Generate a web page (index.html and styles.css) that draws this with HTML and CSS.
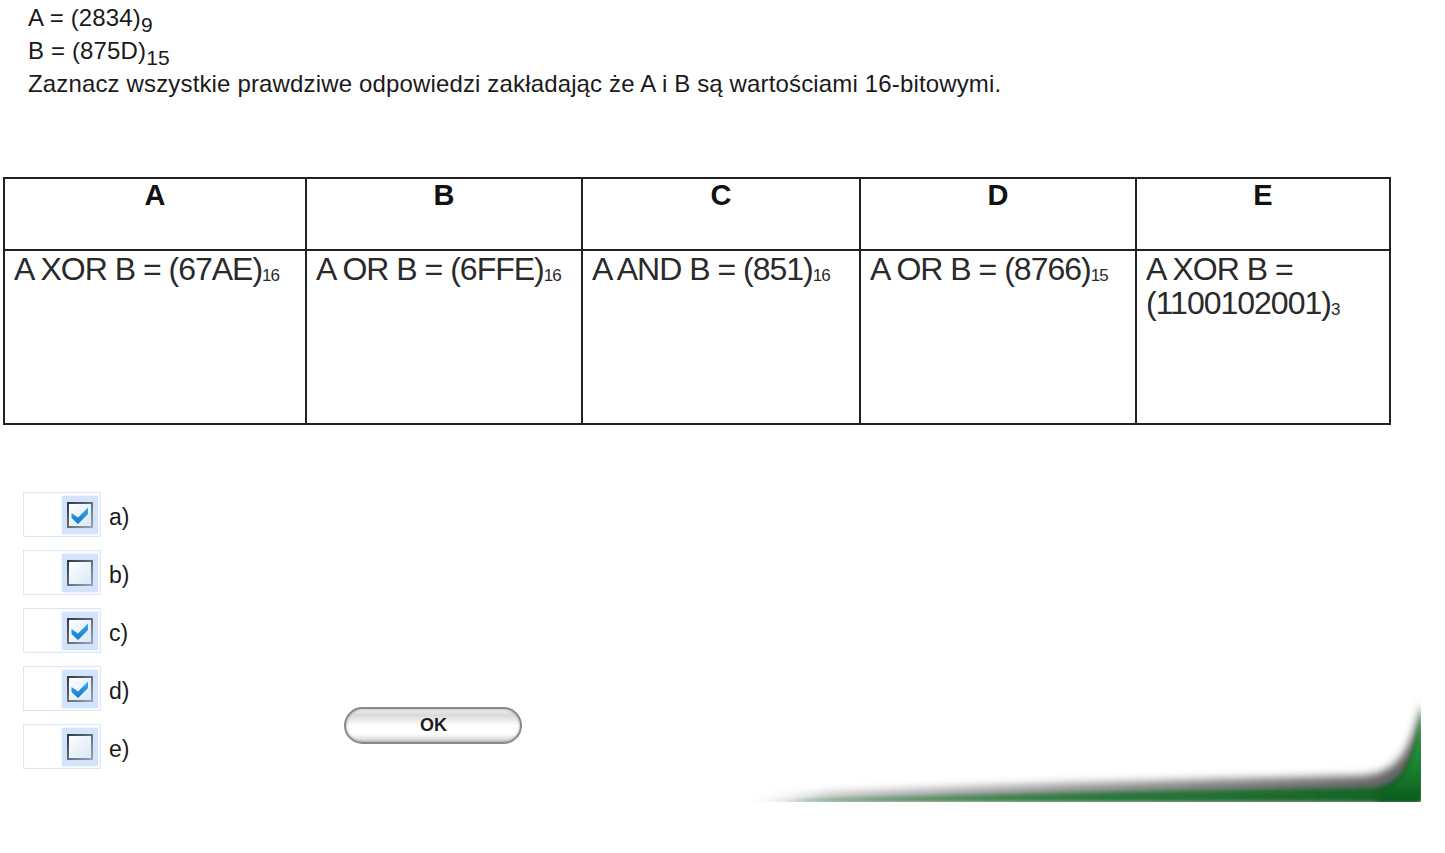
FILE: index.html
```html
<!DOCTYPE html>
<html lang="pl">
<head>
<meta charset="utf-8">
<title>Pytanie</title>
<link rel="stylesheet" href="styles.css">
</head>
<body>
<div class="page">
  <div class="question">
    <div class="line">A = (2834)<sub class="base">9</sub></div>
    <div class="line">B = (875D)<sub class="base">15</sub></div>
    <div class="line">Zaznacz wszystkie prawdziwe odpowiedzi zakładając że A i B są wartościami 16-bitowymi.</div>
  </div>

  <table class="answers">
    <colgroup>
      <col class="c1"><col class="c2"><col class="c3"><col class="c4"><col class="c5">
    </colgroup>
    <tr class="head">
      <th>A</th><th>B</th><th>C</th><th>D</th><th>E</th>
    </tr>
    <tr class="body">
      <td>A XOR B = (67AE)<span class="sb">16</span></td>
      <td>A OR B = (6FFE)<span class="sb">16</span></td>
      <td>A AND B = (851)<span class="sb">16</span></td>
      <td>A OR B = (8766)<span class="sb">15</span></td>
      <td>A XOR B = (1100102001)<span class="sb">3</span></td>
    </tr>
  </table>

  <div class="bottom">
    <div class="options">
      <label class="opt">
        <span class="cbwrap"><span class="cbbg"><svg class="cb" viewBox="0 0 26 26" width="26" height="26"><defs><linearGradient id="fa" x1="0" y1="0" x2="1" y2="1"><stop offset="0" stop-color="#ffffff"/><stop offset="1" stop-color="#d6e8f6"/></linearGradient><linearGradient id="sa" x1="0" y1="0" x2="1" y2="1"><stop offset="0" stop-color="#2f3a48"/><stop offset="1" stop-color="#9aa3ad"/></linearGradient><linearGradient id="ck" x1="0" y1="0" x2="0" y2="1"><stop offset="0" stop-color="#3aa9ea"/><stop offset="1" stop-color="#1479c4"/></linearGradient></defs><rect x="1" y="1" width="24" height="24" fill="url(#fa)" stroke="url(#sa)" stroke-width="2"/><path d="M4.5 11 L11 15.5 L21 5.5 L21 12 L11 22 L4.5 16 Z" fill="url(#ck)"/></svg></span></span>
        <span class="lbl">a)</span>
      </label>
      <label class="opt">
        <span class="cbwrap"><span class="cbbg"><svg class="cb" viewBox="0 0 26 26" width="26" height="26"><rect x="1" y="1" width="24" height="24" fill="url(#fa)" stroke="url(#sa)" stroke-width="2"/></svg></span></span>
        <span class="lbl">b)</span>
      </label>
      <label class="opt">
        <span class="cbwrap"><span class="cbbg"><svg class="cb" viewBox="0 0 26 26" width="26" height="26"><rect x="1" y="1" width="24" height="24" fill="url(#fa)" stroke="url(#sa)" stroke-width="2"/><path d="M4.5 11 L11 15.5 L21 5.5 L21 12 L11 22 L4.5 16 Z" fill="url(#ck)"/></svg></span></span>
        <span class="lbl">c)</span>
      </label>
      <label class="opt">
        <span class="cbwrap"><span class="cbbg"><svg class="cb" viewBox="0 0 26 26" width="26" height="26"><rect x="1" y="1" width="24" height="24" fill="url(#fa)" stroke="url(#sa)" stroke-width="2"/><path d="M4.5 11 L11 15.5 L21 5.5 L21 12 L11 22 L4.5 16 Z" fill="url(#ck)"/></svg></span></span>
        <span class="lbl">d)</span>
      </label>
      <label class="opt">
        <span class="cbwrap"><span class="cbbg"><svg class="cb" viewBox="0 0 26 26" width="26" height="26"><rect x="1" y="1" width="24" height="24" fill="url(#fa)" stroke="url(#sa)" stroke-width="2"/></svg></span></span>
        <span class="lbl">e)</span>
      </label>
    </div>
    <button class="ok" type="button">OK</button>
  </div>

  <svg class="swoosh" width="740" height="130" viewBox="0 0 740 130">
    <defs>
      <linearGradient id="gh" x1="0" y1="0" x2="1" y2="0">
        <stop offset="0" stop-color="#ffffff" stop-opacity="0"/>
        <stop offset="0.1" stop-color="#4f8a5c" stop-opacity="0.8"/>
        <stop offset="0.5" stop-color="#2a7a3c"/>
        <stop offset="0.9" stop-color="#176628"/>
        <stop offset="1" stop-color="#0b5a1d"/>
      </linearGradient>
      <linearGradient id="gg" x1="0" y1="0" x2="1" y2="0">
        <stop offset="0" stop-color="#ffffff" stop-opacity="0"/>
        <stop offset="0.15" stop-color="#8c8c8c" stop-opacity="0.65"/>
        <stop offset="1" stop-color="#5e5e5e"/>
      </linearGradient>
      <linearGradient id="gr" x1="0" y1="0" x2="0" y2="1">
        <stop offset="0" stop-color="#3aa83f"/>
        <stop offset="0.55" stop-color="#1f8a34"/>
        <stop offset="1" stop-color="#0b5a1d"/>
      </linearGradient>
      <filter id="bl" x="-10%" y="-50%" width="120%" height="200%"><feGaussianBlur stdDeviation="4"/></filter>
      <filter id="bl2"><feGaussianBlur stdDeviation="2"/></filter>
    </defs>
    <path d="M25 110 C 200 96, 500 90, 660 86 C 700 84, 712 58, 721 12 L 721 112 Z" fill="url(#gg)" filter="url(#bl)"/>
    <path d="M35 112 C 250 104, 500 100, 670 98 C 705 96, 716 70, 721 18 L 721 112 Z" fill="url(#gh)" filter="url(#bl2)"/>
    <path d="M685 100 C 708 90, 717 60, 721 18 L 721 112 L 675 112 Z" fill="url(#gr)" filter="url(#bl2)"/>
    <rect x="721" y="0" width="19" height="130" fill="#fff"/>
    <rect x="0" y="112" width="740" height="18" fill="#fff"/>
  </svg>
</div>
</body>
</html>
```

FILE: styles.css
```css
html, body {
  margin: 0;
  padding: 0;
  background: #ffffff;
}

body {
  font-family: "Liberation Sans", Arial, sans-serif;
  color: #1a1a1a;
}

.page {
  position: relative;
  width: 1445px;
  height: 853px;
  overflow: hidden;
}

.question {
  padding: 1px 0 0 28px;
  font-size: 24px;
  line-height: 33px;
  letter-spacing: 0.15px;
}

.line {
  white-space: nowrap;
}

.base {
  font-size: 21px;
  line-height: 0;
  vertical-align: -6px;
}

.answers {
  margin: 77px 0 0 3px;
  border-collapse: collapse;
  table-layout: fixed;
  width: 1386px;
  color: #2a2a2a;
}

.c1 { width: 302px; }
.c2 { width: 276px; }
.c3 { width: 278px; }
.c4 { width: 276px; }
.c5 { width: 254px; }

.answers th,
.answers td {
  border: 2px solid #222;
  vertical-align: top;
}

.answers th {
  height: 70px;
  padding: 0;
  font-size: 29px;
  line-height: 33px;
  font-weight: bold;
  text-align: center;
  color: #111;
}

.answers td {
  height: 171px;
  padding: 1px 4px 0 9px;
  font-size: 32px;
  line-height: 34px;
  letter-spacing: -1px;
  text-align: left;
}

.sb {
  font-size: 17px;
  letter-spacing: -1px;
  vertical-align: -1px;
  line-height: 0;
}

.bottom {
  display: flex;
  align-items: flex-start;
  margin-top: 67px;
}

.options {
  display: flex;
  flex-direction: column;
  gap: 13px;
  padding-left: 23px;
}

.opt {
  display: flex;
  align-items: center;
  height: 45px;
}

.cbwrap {
  display: flex;
  align-items: center;
  justify-content: flex-end;
  width: 76px;
  height: 43px;
  border: 1px solid #dbe7f7;
  box-shadow: inset 0 0 2px #eef4fc;
  box-sizing: content-box;
}

.cbbg {
  display: flex;
  align-items: center;
  justify-content: center;
  width: 36px;
  height: 38px;
  margin-right: 2px;
  background: #d2e3fb;
  box-shadow: 0 0 3px #dbe8fb;
}

.cb {
  display: block;
}

.lbl {
  margin-left: 8px;
  padding-top: 5px;
  font-size: 23px;
  color: #1a1a1a;
}

.ok {
  margin: 215px 0 0 215px;
  width: 178px;
  height: 37px;
  border: 2px solid #8a8a8a;
  border-radius: 19px;
  background: linear-gradient(#f4f4f4 0%, #d9d9d9 18%, #ffffff 50%, #ffffff 75%, #cfcfcf 100%);
  box-shadow: inset 0 0 3px rgba(0,0,0,0.35);
  font-family: "Liberation Sans", Arial, sans-serif;
  font-weight: bold;
  font-size: 18px;
  color: #1c1c1c;
  padding: 0;
}

.swoosh {
  position: absolute;
  left: 700px;
  top: 690px;
}
```
